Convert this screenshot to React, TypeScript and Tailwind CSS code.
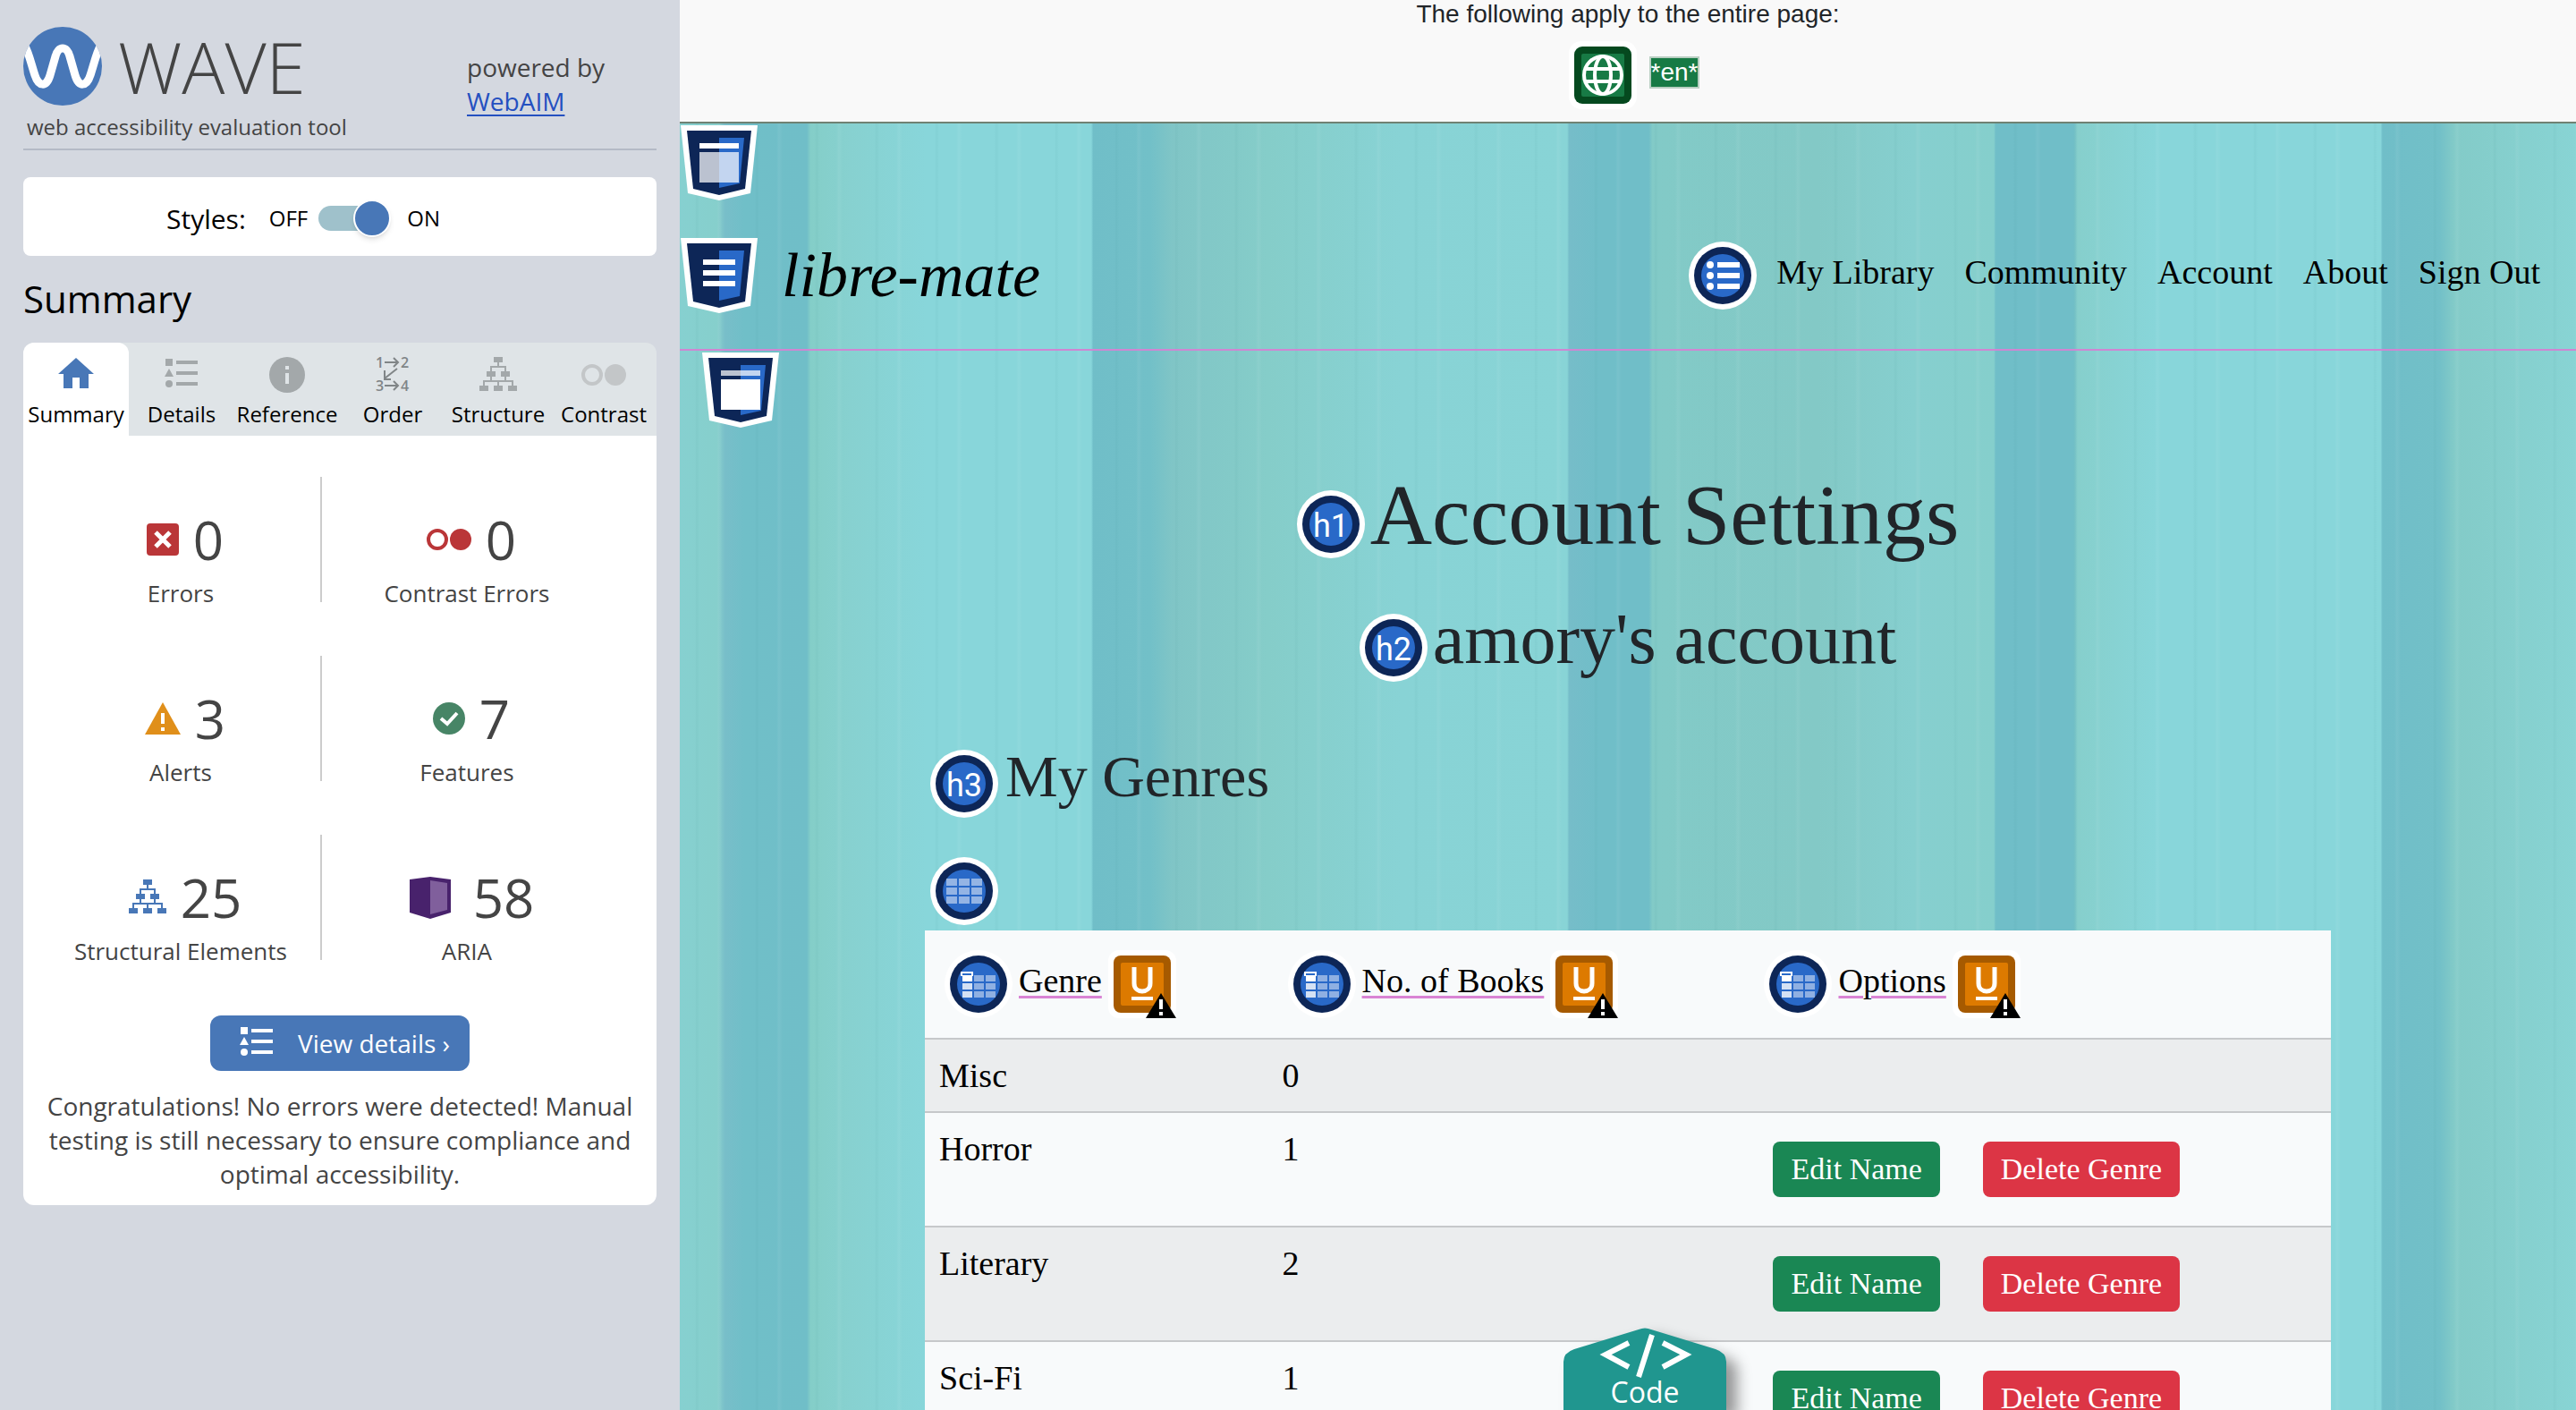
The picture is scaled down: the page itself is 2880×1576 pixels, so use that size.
import React from "react";

const serif = "font-['Source_Serif_Pro','Liberation_Serif',serif]";

/* ---------- Sidebar icons ---------- */

function WaveLogo() {
  return (
    <svg viewBox="0 0 88 88" className="size-[88px] shrink-0" aria-hidden="true">
      <defs>
        <clipPath id="logo-disc">
          <circle cx="44" cy="44" r="44" />
        </clipPath>
      </defs>
      <circle cx="44" cy="44" r="44" fill="#4877b7" />
      <path
        d="M1 20 C6 28 9 42 13 54 C17 67 26 68 30 54 L36 33 C39 21 49 21 52 33 L58 54 C62 68 71 67 75 54 C79 42 82 28 87 20"
        fill="none"
        stroke="#fff"
        strokeWidth="9"
        clipPath="url(#logo-disc)"
      />
    </svg>
  );
}

function HomeIcon() {
  return (
    <svg viewBox="0 0 40 40" className="size-10" aria-hidden="true">
      <path d="M20 1 L40 19 H34 V35 H24 V23 H16 V35 H6 V19 H0 Z" fill="#4877b7" />
    </svg>
  );
}

function ListIcon({ color }: { color: string }) {
  return (
    <svg viewBox="0 0 40 40" className="size-10" fill={color} aria-hidden="true">
      <rect x="2" y="2" width="8" height="8" />
      <rect x="14" y="4" width="24" height="4" />
      <path d="M6 13 L11 22 H1 Z" />
      <rect x="14" y="16" width="24" height="4" />
      <circle cx="6" cy="30" r="4" />
      <rect x="14" y="28" width="24" height="4" />
    </svg>
  );
}

function InfoIcon() {
  return (
    <svg viewBox="0 0 40 40" className="size-10" aria-hidden="true">
      <circle cx="20" cy="20" r="20" fill="#a3a8aa" />
      <rect x="18" y="10" width="4" height="4" fill="#dfe4e7" />
      <rect x="18" y="18" width="4" height="12" fill="#dfe4e7" />
    </svg>
  );
}

function OrderIcon() {
  return (
    <svg viewBox="0 0 40 40" className="size-10 overflow-visible" aria-hidden="true">
      <g fill="#808587" className="font-['Open_Sans',sans-serif] font-semibold" fontSize="16">
        <text x="1" y="12">1</text>
        <text x="29" y="12">2</text>
        <text x="1" y="38">3</text>
        <text x="29" y="38">4</text>
      </g>
      <path
        d="M11 6 H26 M21 1 L26 6 L21 11 M11 32 H26 M21 27 L26 32 L21 37 M25 13 L11 24 M11 15 V25 H18"
        fill="none"
        stroke="#808587"
        strokeWidth="2"
      />
    </svg>
  );
}

function TreeIcon({ color }: { color: string }) {
  return (
    <svg viewBox="0 0 42 40" className="h-10 w-[42px]" aria-hidden="true">
      <g fill={color}>
        <rect x="16" y="0" width="10" height="6" />
        <rect x="8" y="16" width="10" height="6" />
        <rect x="24" y="16" width="10" height="6" />
        <rect x="0" y="32" width="10" height="6" />
        <rect x="16" y="32" width="10" height="6" />
        <rect x="32" y="32" width="10" height="6" />
      </g>
      <path
        d="M21 6 V11 M13 16 V11 H29 V16 M13 22 V27 M29 22 V27 M5 32 V27 H37 V32 M21 27 V32"
        fill="none"
        stroke={color}
        strokeWidth="2"
      />
    </svg>
  );
}

function ContrastIcon({ color }: { color: string }) {
  return (
    <svg viewBox="0 0 50 40" className="h-10 w-[50px]" aria-hidden="true">
      <circle cx="12" cy="20" r="10" fill="none" stroke={color} strokeWidth="4" />
      <circle cx="38" cy="20" r="12" fill={color} />
    </svg>
  );
}

function ErrorIcon() {
  return (
    <svg viewBox="0 0 36 36" className="size-9" aria-hidden="true">
      <rect width="36" height="36" rx="4" fill="#ba3638" />
      <path d="M10 10 L26 26 M26 10 L10 26" stroke="#fff" strokeWidth="5" />
    </svg>
  );
}

function AlertIcon() {
  return (
    <svg viewBox="0 0 40 36" className="h-9 w-10" aria-hidden="true">
      <path d="M20 0 L40 36 H0 Z" fill="#e08f1a" />
      <rect x="18" y="12" width="4" height="12" fill="#fff" />
      <rect x="18" y="28" width="4" height="4" fill="#fff" />
    </svg>
  );
}

function FeatureIcon() {
  return (
    <svg viewBox="0 0 36 36" className="size-9" aria-hidden="true">
      <circle cx="18" cy="18" r="18" fill="#478566" />
      <path d="M9 18 L16 24 L27 12" fill="none" stroke="#fff" strokeWidth="4" />
    </svg>
  );
}

function AriaIcon() {
  return (
    <svg viewBox="0 0 48 48" className="mr-2 size-12" aria-hidden="true">
      <path d="M1 4 L24 1 L47 4 V41 L24 48 L1 41 Z" fill="#48226c" />
      <path d="M24 5 L43 8 V38 L24 43 Z" fill="#805f9c" />
    </svg>
  );
}

/* ---------- Page marker icons ---------- */

function Shield({ kind }: { kind: "header" | "nav" | "main" }) {
  return (
    <svg viewBox="0 0 88 84" className="h-[84px] w-[88px] shrink-0" aria-hidden="true">
      <path d="M1 0 H87 L79 76 L44 84 L9 76 Z" fill="#fff" />
      <path d="M8 6 H80 L73 71 L44 78 L15 71 Z" fill="#0d2657" />
      <path d="M44 14 H72 L67 65 L44 70 Z" fill="#2969c8" />
      {kind === "nav" ? (
        <path d="M26 24 h36 v6 h-36 Z M26 36 h36 v6 h-36 Z M26 48 h36 v6 h-36 Z" fill="#fff" />
      ) : (
        <>
          <rect x="22" y="20" width="44" height="6" fill="#fff" opacity={kind === "header" ? 1 : 0.72} />
          <rect x="22" y="30" width="44" height="34" fill="#fff" opacity={kind === "header" ? 0.72 : 1} />
        </>
      )}
    </svg>
  );
}

function Disc({ children }: { children: React.ReactNode }) {
  return (
    <svg viewBox="-38 -38 76 76" className="size-[76px] shrink-0" aria-hidden="true">
      <circle r="38" fill="#fff" />
      <circle r="32" fill="#0d2657" />
      <circle r="24" fill="#2969c8" />
      {children}
    </svg>
  );
}

function HeadingDisc({ label }: { label: string }) {
  return (
    <Disc>
      <text y="14" textAnchor="middle" fontSize="36" fill="#fff" className="font-['Roboto',sans-serif] font-normal">
        {label}
      </text>
    </Disc>
  );
}

function NavDisc() {
  return (
    <Disc>
      {[-12, 0, 12].map((y) => (
        <g key={y} fill="#fff">
          <circle cx="-14" cy={y} r="4" />
          <rect x="-6" y={y - 3} width="25" height="6" />
        </g>
      ))}
    </Disc>
  );
}

function TableDisc() {
  return (
    <Disc>
      {[-14, -4, 6].map((y) =>
        [-20, -6, 8].map((x) => (
          <rect key={`${x}/${y}`} x={x} y={y} width="12" height="8" fill="#fff" opacity="0.5" />
        )),
      )}
    </Disc>
  );
}

function ColumnDisc() {
  return (
    <Disc>
      {[-10, -1, 8].map((y) =>
        [-18, -5, 8].map((x) => (
          <rect
            key={`${x}/${y}`}
            x={x}
            y={y}
            width="11"
            height="7"
            fill="#fff"
            opacity={x === -18 ? (y === -10 ? 1 : 0.8) : 0.48}
          />
        )),
      )}
      <path d="M-19 -9 V-13 H-7 V-9" fill="none" stroke="#fff" strokeWidth="2" />
    </Disc>
  );
}

function UnderlineAlert() {
  return (
    <svg viewBox="0 0 76 76" className="size-[76px] shrink-0" aria-hidden="true">
      <rect width="76" height="76" rx="12" fill="#fff" />
      <rect x="6" y="6" width="64" height="64" rx="8" fill="#a65a00" />
      <rect x="14" y="14" width="48" height="48" rx="2" fill="#dd7a00" />
      <path d="M29 19 V37 C29 49 47 49 47 37 V19" fill="none" stroke="#fff" strokeWidth="5" />
      <rect x="26" y="52" width="24" height="4" fill="#fff" />
      <path d="M59 48 L76 76 H42 Z" fill="#000" />
      <path d="M57 55 h4 v11 h-4 Z M57 69 h4 v4 h-4 Z" fill="#fff" />
    </svg>
  );
}

function GlobeIcon() {
  return (
    <svg viewBox="-38 -38 76 76" className="size-[76px]" aria-hidden="true">
      <rect x="-38" y="-38" width="76" height="76" rx="14" fill="#fff" />
      <rect x="-32" y="-32" width="64" height="64" rx="9" fill="#05491f" />
      <rect x="-24" y="-24" width="48" height="48" rx="2" fill="#177a45" />
      <g fill="none" stroke="#fff" strokeWidth="4">
        <circle r="21" />
        <ellipse rx="9" ry="21" />
        <path d="M-20 -7 H20 M-20 7 H20" />
      </g>
    </svg>
  );
}

/* ---------- Sidebar ---------- */

const tabs = [
  { label: "Summary", icon: <HomeIcon /> },
  { label: "Details", icon: <ListIcon color="#a3a8aa" /> },
  { label: "Reference", icon: <InfoIcon /> },
  { label: "Order", icon: <OrderIcon /> },
  { label: "Structure", icon: <TreeIcon color="#a3a8aa" /> },
  { label: "Contrast", icon: <ContrastIcon color="#c3c6c8" /> },
];

const stats = [
  { label: "Errors", value: 0, icon: <ErrorIcon /> },
  { label: "Contrast Errors", value: 0, icon: <ContrastIcon color="#ba3638" /> },
  { label: "Alerts", value: 3, icon: <AlertIcon /> },
  { label: "Features", value: 7, icon: <FeatureIcon /> },
  { label: "Structural Elements", value: 25, icon: <TreeIcon color="#4877b7" /> },
  { label: "ARIA", value: 58, icon: <AriaIcon /> },
];

function Sidebar() {
  return (
    <aside className="w-[760px] shrink-0 bg-[#d4d8e0] px-[26px] pt-[30px] font-['Open_Sans',sans-serif] text-black">
      <div className="flex justify-between border-b-2 border-[#b4bac6] pb-2 text-[#444]">
        <div>
          <div className="flex items-center gap-[18px]">
            <WaveLogo />
            <span className="text-[80px] leading-[88px] font-light">WAVE</span>
          </div>
          <p className="mt-2 pl-1 text-2xl leading-8">web accessibility evaluation tool</p>
        </div>
        <p className="mt-[26px] w-[212px] text-[28px] leading-[38px]">
          powered by
          <br />
          <a href="#webaim" className="text-[#2450c0] underline decoration-2 underline-offset-4">
            WebAIM
          </a>
        </p>
      </div>

      <div className="mt-[30px] flex h-[88px] items-center rounded-lg bg-white pt-1 pl-[160px]">
        <label htmlFor="styles-switch" className="text-[30px]">
          Styles:
        </label>
        <span className="ml-[26px] text-2xl">OFF</span>
        <input
          id="styles-switch"
          type="checkbox"
          role="switch"
          defaultChecked
          className="relative ml-3 h-7 w-[80px] appearance-none rounded-full bg-[#9fc1cb] before:absolute before:top-[-7px] before:right-[-1px] before:size-[42px] before:rounded-full before:border-2 before:border-white before:bg-[#4877b7] before:shadow-md"
        />
        <span className="ml-[19px] text-2xl">ON</span>
      </div>

      <h2 className="mt-5 mb-[21px] text-[42px] leading-[56px]">Summary</h2>

      <div role="tablist" className="grid grid-cols-6 rounded-t-xl bg-[#dfe4e7]">
        {tabs.map((tab, i) => (
          <button
            key={tab.label}
            type="button"
            role="tab"
            aria-selected={i === 0}
            className={`flex flex-col items-center gap-2 pt-4 pb-2 text-2xl leading-8 ${i === 0 ? "rounded-t-xl bg-white" : ""}`}
          >
            {tab.icon}
            {tab.label}
          </button>
        ))}
      </div>

      <section className="rounded-b-xl bg-white pt-[46px] pb-4 text-center text-[#444]">
        <div className="grid grid-cols-[31fr_32fr] gap-y-[60px] pr-[50px] pl-5">
          {stats.map((stat, i) => (
            <div
              key={stat.label}
              className={`flex h-[140px] flex-col items-center pt-10 ${i % 2 === 0 ? "border-r-2 border-[#ccc]" : ""}`}
            >
              <div className="flex items-center gap-4 pl-2.5">
                {stat.icon}
                <span className="text-[60px] leading-[60px]">{stat.value}</span>
              </div>
              <span className="mt-4 text-[26px] leading-7">{stat.label}</span>
            </div>
          ))}
        </div>
        <button
          type="button"
          className="mx-auto mt-[62px] flex h-[62px] items-center gap-[26px] rounded-xl bg-[#4877b7] pr-[22px] pl-8 text-[28px] text-white"
        >
          <ListIcon color="#fff" />
          View details ›
        </button>
        <p className="mt-5 px-6 text-[28px] leading-[38px]">
          Congratulations! No errors were detected! Manual testing is still necessary to ensure compliance and optimal
          accessibility.
        </p>
      </section>
    </aside>
  );
}

/* ---------- Evaluated page ---------- */

const navLinks = ["My Library", "Community", "Account", "About", "Sign Out"];
const columns = ["Genre", "No. of Books", "Options"];
const genres = [
  { name: "Misc", books: 0, editable: false },
  { name: "Horror", books: 1, editable: true },
  { name: "Literary", books: 2, editable: true },
  { name: "Sci-Fi", books: 1, editable: true },
];

function GenreTable() {
  return (
    <table className="mt-1.5 w-full table-fixed border-separate border-spacing-0 bg-[#f8fafb] text-left text-[38px] leading-[56px] text-black">
      <colgroup>
        <col className="w-[24.4%]" />
        <col className="w-[33.9%]" />
        <col />
      </colgroup>
      <thead>
        <tr>
          {columns.map((name) => (
            <th key={name} scope="col" className="border-b-2 border-[#c6c8ca] py-[22px] pl-[22px] font-normal">
              <div className="flex items-center gap-[7px]">
                <ColumnDisc />
                <span className="pb-2 whitespace-nowrap underline decoration-[#d984d4] decoration-3 underline-offset-4">{name}</span>
                <UnderlineAlert />
              </div>
            </th>
          ))}
        </tr>
      </thead>
      <tbody>
        {genres.map((genre) => (
          <tr key={genre.name} className="align-top odd:bg-[#ebedee]">
            <td className="border-b-2 border-[#c6c8ca] px-4 py-3">{genre.name}</td>
            <td className="border-b-2 border-[#c6c8ca] px-4 py-3">{genre.books}</td>
            <td className={`border-b-2 border-[#c6c8ca] px-8 ${genre.editable ? "py-8" : ""}`}>
              {genre.editable && (
                <div className="flex gap-12 text-[34px] text-white">
                  <button type="button" className="h-[62px] rounded-lg bg-[#1a8754] px-5">
                    Edit Name
                  </button>
                  <button type="button" className="h-[62px] rounded-lg bg-[#dc3545] px-5">
                    Delete Genre
                  </button>
                </div>
              )}
            </td>
          </tr>
        ))}
      </tbody>
    </table>
  );
}

function CodeTab() {
  return (
    <button
      type="button"
      className="absolute bottom-0 left-[988px] h-[92px] w-[182px] font-['Open_Sans',sans-serif] text-[32px] leading-10 text-white"
    >
      <svg viewBox="0 0 182 92" className="absolute inset-0 size-full overflow-visible drop-shadow-[12px_10px_8px_rgba(0,0,0,0.4)]" aria-hidden="true">
        <path d="M0 92 V38 Q0 28 12 24 L84 2 Q91 -1 98 2 L170 24 Q182 28 182 38 V92 Z" fill="#20968f" />
        <path d="M73 17 L47 30 L73 44 M111 17 L137 30 L111 44 M99 8 L84 55" fill="none" stroke="#fff" strokeWidth="6" />
      </svg>
      <span className="relative block pt-[51px]">Code</span>
    </button>
  );
}

export default function App() {
  return (
    <div className="flex h-screen overflow-hidden">
      <Sidebar />
      <div className="relative flex min-w-0 flex-1 flex-col overflow-hidden">
        <div className="border-b-2 border-[#6f8273] bg-[#f9f9f9] pb-3.5 text-center font-['Liberation_Sans',sans-serif] text-[28px] leading-8 text-[#212529]">
          <p>The following apply to the entire page:</p>
          <div className="mt-3.5 flex items-center justify-center gap-3.5 pl-3.5">
            <GlobeIcon />
            <span className="mb-1.5 border-2 border-[#b9cfc2] bg-[#177a45] text-white">*en*</span>
          </div>
        </div>

        <div
          className={`flex-1 bg-[repeating-linear-gradient(90deg,transparent_0px,transparent_17px,rgba(40,120,120,0.05)_19px,transparent_22px,transparent_41px,rgba(255,255,255,0.06)_44px,transparent_48px,transparent_67px),linear-gradient(90deg,#86d0d0_0%,#86cfcc_2%,#78bec9_2.4%,#70bfc8_3.4%,#70bec8_6.7%,#84cec8_6.9%,#87d1d0_9%,#88d6da_13%,#88d6da_21.7%,#70bec8_21.8%,#72c0c8_24.8%,#80c5c6_26%,#85cdc9_31%,#88d3d5_38%,#88d4d6_46.8%,#76bdc9_46.9%,#70bec8_48.5%,#70bec8_51.1%,#82cac7_51.3%,#83c9c6_60%,#86cfcf_65%,#85cfcc_69.3%,#70bec8_69.4%,#70bec8_73.5%,#86cfcc_73.7%,#88d6da_78%,#88d6da_89.7%,#70bec8_89.8%,#72c0c8_92.8%,#83cbc8_93.6%,#88d4d4_100%)] ${serif}`}
        >
          <header className="border-b-2 border-[#cf86d2] pt-0.5 pb-10 text-black">
            <Shield kind="header" />
            <div className="mt-[42px] flex items-center pr-10">
              <Shield kind="nav" />
              <a href="#home" className="ml-[26px] text-[70px] leading-[84px] whitespace-nowrap italic">
                libre-mate
              </a>
              <nav className="ml-auto flex items-center gap-[22px]">
                <NavDisc />
                <ul className="flex gap-[34px] pb-2 text-[38px] leading-[56px] whitespace-nowrap">
                  {navLinks.map((link) => (
                    <li key={link}>
                      <a href="#nav">{link}</a>
                    </li>
                  ))}
                </ul>
              </nav>
            </div>
          </header>

          <main className="pt-0.5 text-[#212529]">
            <div className="pl-6">
              <Shield kind="main" />
            </div>
            <div className="mt-[50px] flex items-center justify-center gap-1.5">
              <HeadingDisc label="h1" />
              <h1 className="pb-5 text-[96px] leading-[96px]">Account Settings</h1>
            </div>
            <div className="mt-[30px] flex items-center justify-center gap-1.5">
              <HeadingDisc label="h2" />
              <h2 className="pb-5 text-[80px] leading-[80px]">amory's account</h2>
            </div>
            <div className="mt-[58px] px-[274px]">
              <div className="flex items-center gap-2 pl-1.5">
                <HeadingDisc label="h3" />
                <h3 className="pb-4 text-[66px] leading-[72px]">My Genres</h3>
              </div>
              <div className="mt-[38px] pl-1.5">
                <TableDisc />
              </div>
              <GenreTable />
            </div>
          </main>
        </div>
        <CodeTab />
      </div>
    </div>
  );
}
